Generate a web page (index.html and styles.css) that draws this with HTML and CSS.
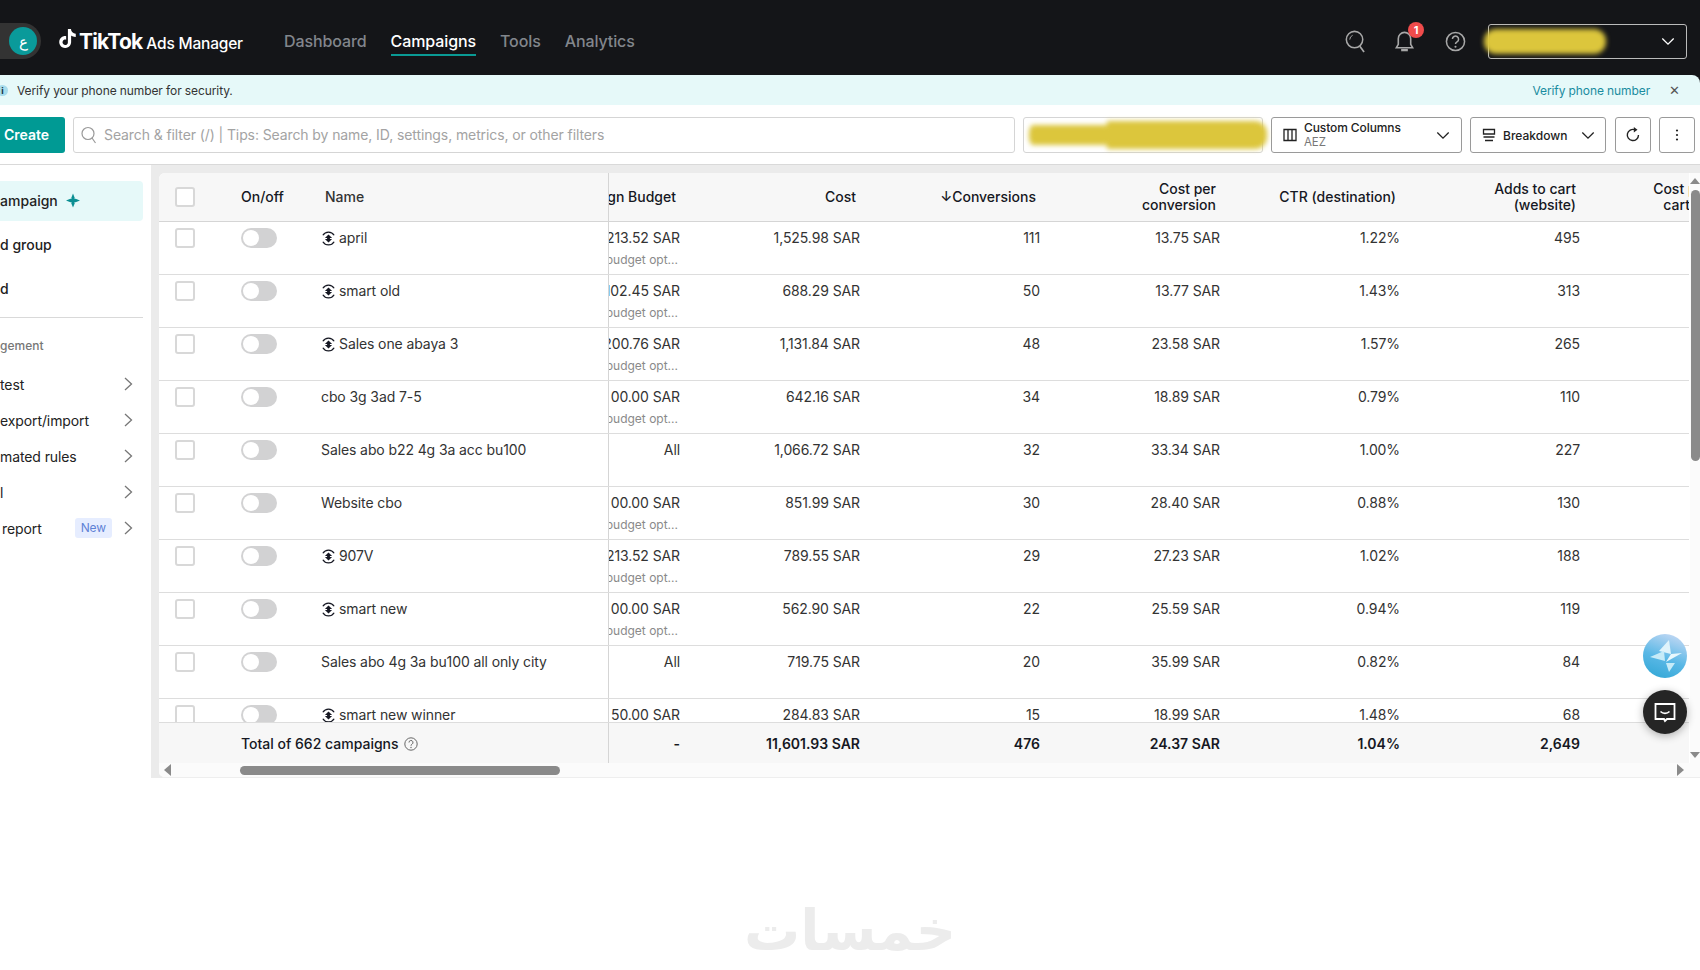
FILE: index.html
```html
<!DOCTYPE html>
<html lang="en">
<head>
    <meta charset="UTF-8">
    <title>TikTok Ads Manager</title>
    <link rel="stylesheet" href="styles.css">
</head>
<body>
    <svg class="sprite" xmlns="http://www.w3.org/2000/svg">
        <symbol id="smart" viewBox="0 0 16 16">
            <path d="M2 4.500A7 7 0 0 1 14 4.500M2 11.500A7 7 0 0 0 14 11.500" fill="none" stroke="currentColor" stroke-width="1.400"/>
            <path d="M8 3.800L11.800 7.400H9.500V8.600H11.800L8 12.200L4.200 8.600H6.500V7.400H4.200Z" fill="currentColor"/>
        </symbol>
        <symbol id="chev-right" viewBox="0 0 12 16">
            <path d="M3 2L9.500 8L3 14" fill="none" stroke="currentColor" stroke-width="1.300"/>
        </symbol>
        <symbol id="chev-down" viewBox="0 0 16 10">
            <path d="M1.500 1.500L8 8L14.500 1.500" fill="none" stroke="currentColor" stroke-width="1.500"/>
        </symbol>
    </svg>

    <header class="topbar">
        <div class="avatar-pill"><span class="avatar">ع</span></div>
        <div class="brand">
            <svg class="brand-note" viewBox="0 0 24 24"><path fill="#fff" d="M12.525.02c1.31-.02 2.61-.01 3.91-.02.08 1.53.63 3.09 1.75 4.17 1.12 1.11 2.7 1.62 4.24 1.79v4.03c-1.44-.05-2.89-.35-4.2-.97-.57-.26-1.1-.59-1.62-.93-.01 2.92.01 5.84-.02 8.75-.08 1.4-.54 2.79-1.35 3.94-1.31 1.92-3.58 3.17-5.91 3.21-1.43.08-2.86-.31-4.08-1.03-2.02-1.19-3.44-3.37-3.65-5.71-.02-.5-.03-1-.01-1.49.18-1.9 1.12-3.72 2.58-4.96 1.66-1.44 3.98-2.13 6.15-1.72.02 1.48-.04 2.96-.04 4.44-.99-.32-2.15-.23-3.02.37-.63.41-1.11 1.04-1.36 1.75-.21.51-.15 1.07-.14 1.61.24 1.64 1.82 3.02 3.5 2.87 1.12-.01 2.19-.66 2.77-1.61.19-.33.4-.67.41-1.06.1-1.79.06-3.57.07-5.36.01-4.03-.01-8.05.02-12.07z"/></svg>
            <span class="brand-name">TikTok</span>
            <span class="brand-sub">Ads Manager</span>
        </div>
        <nav class="nav">
            <a>Dashboard</a>
            <a class="active">Campaigns</a>
            <a>Tools</a>
            <a>Analytics</a>
        </nav>
        <div class="top-icons">
            <svg class="top-icon search-top" viewBox="0 0 22 24"><circle cx="10" cy="10" r="8.600" fill="none" stroke="#a8a8a8" stroke-width="1.600"/><path d="M15.500 17L20 23" stroke="#a8a8a8" stroke-width="1.800" fill="none"/><path d="M5 10a5 5 0 0 1 3-4.500" stroke="#a8a8a8" stroke-width="1" fill="none"/></svg>
            <div class="bell">
                <svg class="top-icon" viewBox="0 0 22 24"><path d="M11 2.500a6.500 6.500 0 0 0-6.500 6.500v6L2.500 18.500h17L17.500 15V9A6.500 6.500 0 0 0 11 2.500Z" fill="none" stroke="#a8a8a8" stroke-width="1.700"/><path d="M7.500 21h7" stroke="#a8a8a8" stroke-width="2.500" fill="none"/></svg>
                <span class="badge">1</span>
            </div>
            <svg class="top-icon help" viewBox="0 0 22 22"><circle cx="11" cy="11" r="9.500" fill="none" stroke="#a8a8a8" stroke-width="1.600"/><path d="M7.800 8.500a3.200 3.200 0 1 1 4.800 2.800c-1 .6-1.600 1.200-1.600 2.400" fill="none" stroke="#a8a8a8" stroke-width="1.600"/><circle cx="11" cy="16.500" r="1.100" fill="#a8a8a8"/></svg>
        </div>
        <div class="account">
            <div class="smudge smudge-account"></div>
            <svg class="account-chev"><use href="#chev-down"/></svg>
        </div>
    </header>

    <div class="banner-wrap">
        <div class="banner">
            <span class="info-dot">i</span>
            <span class="banner-text">Verify your phone number for security.</span>
            <a class="banner-link">Verify phone number</a>
            <span class="banner-close">✕</span>
        </div>
    </div>

    <div class="toolbar">
        <button class="create">Create</button>
        <div class="search">
            <svg class="search-icon" viewBox="0 0 16 18"><circle cx="7" cy="7.500" r="6" fill="none" stroke="#999" stroke-width="1.200"/><path d="M11 12L14.500 17" stroke="#999" stroke-width="1.200"/></svg>
            <span>Search &amp; filter (/) | Tips: Search by name, ID, settings, metrics, or other filters</span>
        </div>
        <div class="date-box"><div class="smudge smudge-date"></div></div>
        <div class="tool-btn columns">
            <svg class="tool-icon" viewBox="0 0 14 14"><path d="M1 1.500H13V12.500H1ZM5 1.500V12.500M9 1.500V12.500" fill="none" stroke="#222" stroke-width="1.300"/></svg>
            <div class="columns-label"><span>Custom Columns</span><small>AEZ</small></div>
            <svg class="tool-chev"><use href="#chev-down"/></svg>
        </div>
        <div class="tool-btn breakdown">
            <svg class="tool-icon" viewBox="0 0 14 14"><path d="M1.500 1.500H12.500V6H1.500ZM1.500 9H12.500M3 12.500H11" fill="none" stroke="#222" stroke-width="1.300"/></svg>
            <span>Breakdown</span>
            <svg class="tool-chev"><use href="#chev-down"/></svg>
        </div>
        <div class="tool-btn square refresh">
            <svg viewBox="0 0 16 16" width="16" height="16"><path d="M13.500 8A5.600 5.600 0 1 1 9.800 2.700" fill="none" stroke="#222" stroke-width="1.400"/><path d="M8.800 0L12.500 2.800L8.800 5.500Z" fill="#222"/></svg>
        </div>
        <div class="tool-btn square more">
            <svg viewBox="0 0 4 14" width="4" height="14"><circle cx="2" cy="2.500" r="1.100" fill="#222"/><circle cx="2" cy="7" r="1.100" fill="#222"/><circle cx="2" cy="11.500" r="1.100" fill="#222"/></svg>
        </div>
    </div>

    <div class="content">
        <aside class="sidebar">
            <div class="side-item active">ampaign
                <svg class="spark" viewBox="0 0 16 16"><path d="M8 0L10 5L9.600 6.400L11 6L16 8L11 10L9.600 9.600L10 11L8 16L6 11L6.400 9.600L5 10L0 8L5 6L6.400 6.400L6 5Z" fill="#0b8f93"/></svg>
            </div>
            <div class="side-item">d group</div>
            <div class="side-item">d</div>
            <div class="side-rule"></div>
            <div class="side-title">gement</div>
            <div class="side-link">test<svg class="side-chev"><use href="#chev-right"/></svg></div>
            <div class="side-link">export/import<svg class="side-chev"><use href="#chev-right"/></svg></div>
            <div class="side-link">mated rules<svg class="side-chev"><use href="#chev-right"/></svg></div>
            <div class="side-link">l<svg class="side-chev"><use href="#chev-right"/></svg></div>
            <div class="side-link"><span class="report">report</span><span class="new-tag">New</span><svg class="side-chev"><use href="#chev-right"/></svg></div>
        </aside>

        <section class="card">
            <div class="table">
                <div class="row head">
                    <div class="c-check"><span class="check"></span></div>
                    <div class="c-toggle">On/off</div>
                    <div class="c-name">Name</div>
                    <div class="c-budget"><span>Campaign Budget</span></div>
                    <div class="num">Cost</div>
                    <div class="num">↓Conversions</div>
                    <div class="num">Cost per<br>conversion</div>
                    <div class="num">CTR (destination)</div>
                    <div class="num">Adds to cart<br>(website)</div>
                    <div class="num">Cost per add to<br>cart (website)</div>
                </div>

                <div class="rows">
                    <div class="row">
                        <div class="c-check"><span class="check"></span></div>
                        <div class="c-toggle"><span class="switch"></span></div>
                        <div class="c-name"><svg class="smart"><use href="#smart"/></svg>april</div>
                        <div class="c-budget"><span>213.52 SAR</span><small>budget opt...</small></div>
                        <div class="num">1,525.98 SAR</div>
                        <div class="num">111</div>
                        <div class="num">13.75 SAR</div>
                        <div class="num">1.22%</div>
                        <div class="num">495</div>
                        <div></div>
                    </div>
                    <div class="row">
                        <div class="c-check"><span class="check"></span></div>
                        <div class="c-toggle"><span class="switch"></span></div>
                        <div class="c-name"><svg class="smart"><use href="#smart"/></svg>smart old</div>
                        <div class="c-budget"><span>102.45 SAR</span><small>budget opt...</small></div>
                        <div class="num">688.29 SAR</div>
                        <div class="num">50</div>
                        <div class="num">13.77 SAR</div>
                        <div class="num">1.43%</div>
                        <div class="num">313</div>
                        <div></div>
                    </div>
                    <div class="row">
                        <div class="c-check"><span class="check"></span></div>
                        <div class="c-toggle"><span class="switch"></span></div>
                        <div class="c-name"><svg class="smart"><use href="#smart"/></svg>Sales one abaya 3</div>
                        <div class="c-budget"><span>200.76 SAR</span><small>budget opt...</small></div>
                        <div class="num">1,131.84 SAR</div>
                        <div class="num">48</div>
                        <div class="num">23.58 SAR</div>
                        <div class="num">1.57%</div>
                        <div class="num">265</div>
                        <div></div>
                    </div>
                    <div class="row">
                        <div class="c-check"><span class="check"></span></div>
                        <div class="c-toggle"><span class="switch"></span></div>
                        <div class="c-name">cbo 3g 3ad 7-5</div>
                        <div class="c-budget"><span>00.00 SAR</span><small>budget opt...</small></div>
                        <div class="num">642.16 SAR</div>
                        <div class="num">34</div>
                        <div class="num">18.89 SAR</div>
                        <div class="num">0.79%</div>
                        <div class="num">110</div>
                        <div></div>
                    </div>
                    <div class="row">
                        <div class="c-check"><span class="check"></span></div>
                        <div class="c-toggle"><span class="switch"></span></div>
                        <div class="c-name">Sales abo b22 4g 3a acc bu100</div>
                        <div class="c-budget"><span>All</span></div>
                        <div class="num">1,066.72 SAR</div>
                        <div class="num">32</div>
                        <div class="num">33.34 SAR</div>
                        <div class="num">1.00%</div>
                        <div class="num">227</div>
                        <div></div>
                    </div>
                    <div class="row">
                        <div class="c-check"><span class="check"></span></div>
                        <div class="c-toggle"><span class="switch"></span></div>
                        <div class="c-name">Website cbo</div>
                        <div class="c-budget"><span>00.00 SAR</span><small>budget opt...</small></div>
                        <div class="num">851.99 SAR</div>
                        <div class="num">30</div>
                        <div class="num">28.40 SAR</div>
                        <div class="num">0.88%</div>
                        <div class="num">130</div>
                        <div></div>
                    </div>
                    <div class="row">
                        <div class="c-check"><span class="check"></span></div>
                        <div class="c-toggle"><span class="switch"></span></div>
                        <div class="c-name"><svg class="smart"><use href="#smart"/></svg>907V</div>
                        <div class="c-budget"><span>213.52 SAR</span><small>budget opt...</small></div>
                        <div class="num">789.55 SAR</div>
                        <div class="num">29</div>
                        <div class="num">27.23 SAR</div>
                        <div class="num">1.02%</div>
                        <div class="num">188</div>
                        <div></div>
                    </div>
                    <div class="row">
                        <div class="c-check"><span class="check"></span></div>
                        <div class="c-toggle"><span class="switch"></span></div>
                        <div class="c-name"><svg class="smart"><use href="#smart"/></svg>smart new</div>
                        <div class="c-budget"><span>00.00 SAR</span><small>budget opt...</small></div>
                        <div class="num">562.90 SAR</div>
                        <div class="num">22</div>
                        <div class="num">25.59 SAR</div>
                        <div class="num">0.94%</div>
                        <div class="num">119</div>
                        <div></div>
                    </div>
                    <div class="row">
                        <div class="c-check"><span class="check"></span></div>
                        <div class="c-toggle"><span class="switch"></span></div>
                        <div class="c-name">Sales abo 4g 3a bu100 all only city</div>
                        <div class="c-budget"><span>All</span></div>
                        <div class="num">719.75 SAR</div>
                        <div class="num">20</div>
                        <div class="num">35.99 SAR</div>
                        <div class="num">0.82%</div>
                        <div class="num">84</div>
                        <div></div>
                    </div>
                    <div class="row">
                        <div class="c-check"><span class="check"></span></div>
                        <div class="c-toggle"><span class="switch"></span></div>
                        <div class="c-name"><svg class="smart"><use href="#smart"/></svg>smart new winner</div>
                        <div class="c-budget"><span>50.00 SAR</span></div>
                        <div class="num">284.83 SAR</div>
                        <div class="num">15</div>
                        <div class="num">18.99 SAR</div>
                        <div class="num">1.48%</div>
                        <div class="num">68</div>
                        <div></div>
                    </div>
                </div>

                <div class="row total">
                    <div class="c-check"></div>
                    <div class="c-total">Total of 662 campaigns
                        <svg class="total-help" viewBox="0 0 14 14"><circle cx="7" cy="7" r="6.200" fill="none" stroke="#666" stroke-width="1"/><path d="M5 5.500a2 2 0 1 1 3 1.700c-.6.400-1 .7-1 1.500" fill="none" stroke="#666" stroke-width="1"/><circle cx="7" cy="10.500" r=".7" fill="#666"/></svg>
                    </div>
                    <div class="c-budget"><span>-</span></div>
                    <div class="num">11,601.93 SAR</div>
                    <div class="num">476</div>
                    <div class="num">24.37 SAR</div>
                    <div class="num">1.04%</div>
                    <div class="num">2,649</div>
                    <div></div>
                </div>
            </div>

            <div class="vscroll">
                <span class="arrow-up"></span>
                <span class="vthumb"></span>
                <span class="arrow-down"></span>
            </div>
            <div class="hscroll">
                <span class="arrow-left"></span>
                <span class="hthumb"></span>
                <span class="arrow-right"></span>
            </div>
        </section>
    </div>

    <div class="float-btn assistant">
        <svg viewBox="0 0 44 44" width="44" height="44"><path d="M26 6L28 20L16 17Z" fill="#dff3fb"/><path d="M7 23L21 17L22 27Z" fill="#c6ebf8"/><path d="M28 20L39 19L23 28Z" fill="#e9f8fd"/><path d="M23 29L32 29L26 38Z" fill="#c6ebf8"/></svg>
    </div>
    <div class="float-btn chat">
        <svg viewBox="0 0 24 24" width="24" height="24"><path d="M2.500 4H21.500V19H14L12 21L11 19H2.500Z" fill="none" stroke="#fff" stroke-width="1.800"/><path d="M7.500 11.500C10 14 14 14 16.500 11.500" fill="none" stroke="#fff" stroke-width="1.600"/></svg>
    </div>

    <footer class="watermark">خمسات</footer>
</body>
</html>
```

FILE: styles.css
```css
* {
    box-sizing: border-box;
}
html, body {
    margin: 0;
    height: 970px;
    overflow: hidden;
}
body {
    position: relative;
    font-family: Inter, "Noto Sans", sans-serif;
    font-size: 14px;
    letter-spacing: -0.1px;
    color: #333;
    background: #fff;
}
.sprite {
    position: absolute;
    width: 0;
    height: 0;
}

/* top bar */
.topbar {
    display: flex;
    align-items: center;
    height: 75px;
    padding-top: 7px;
    background: #141518;
}
.avatar-pill {
    display: flex;
    align-items: center;
    justify-content: flex-end;
    width: 41px;
    height: 36px;
    padding-right: 4px;
    background: #333;
    border-radius: 0 18px 18px 0;
}
.avatar {
    display: flex;
    align-items: center;
    justify-content: center;
    width: 28px;
    height: 28px;
    border-radius: 50%;
    background: #0a9a9a;
    color: #fff;
    font-size: 15px;
}
.brand {
    display: flex;
    align-items: baseline;
    margin-left: 17px;
    width: 226px;
    color: #fff;
}
.brand-note {
    width: 19px;
    height: 23px;
    align-self: center;
    margin-right: 2px;
    margin-top: -6px;
}
.brand-name {
    font-size: 21px;
    font-weight: 700;
    letter-spacing: -0.8px;
}
.brand-sub {
    margin-left: 4px;
    font-size: 15.500px;
    font-weight: 500;
    letter-spacing: -0.2px;
}
.nav {
    display: flex;
    gap: 24px;
    font-size: 16px;
    font-weight: 500;
    color: #82868c;
}
.nav a {
    padding: 5px 0 3px;
    border-bottom: 2px solid transparent;
}
.nav a.active {
    color: #fff;
    border-bottom-color: #0a9a94;
}
.top-icons {
    display: flex;
    align-items: center;
    gap: 30px;
    margin-left: auto;
    margin-right: 22px;
}
.top-icon {
    display: block;
    width: 21px;
    height: 23px;
}
.top-icon.search-top {
    margin-right: -2px;
}
.top-icon.help {
    width: 21px;
    height: 21px;
}
.bell {
    position: relative;
}
.badge {
    position: absolute;
    top: -8px;
    right: -9px;
    width: 16px;
    height: 16px;
    border-radius: 50%;
    background: #f04b4b;
    color: #fff;
    font-size: 11px;
    font-weight: 700;
    line-height: 16px;
    text-align: center;
}
.account {
    display: flex;
    align-items: center;
    justify-content: space-between;
    width: 199px;
    height: 35px;
    margin-right: 13px;
    padding-right: 11px;
    border: 1px solid #bbb;
    border-radius: 3px;
}
.account-chev {
    width: 14px;
    height: 9px;
    color: #fff;
}
.smudge {
    background: #dcc63c;
    border-radius: 12px;
    filter: blur(2.500px);
}
.smudge-account {
    width: 122px;
    height: 25px;
    margin-left: -5px;
}

/* banner */
.banner-wrap {
    background: #141518;
}
.banner {
    display: flex;
    align-items: center;
    height: 30px;
    padding-right: 20px;
    background: #e6f9f9;
    border-top-right-radius: 8px;
    font-size: 12px;
    color: #333;
}
.info-dot {
    flex: none;
    width: 11px;
    height: 11px;
    margin-left: -3px;
    margin-right: 9px;
    border-radius: 50%;
    background: #a7dcec;
    color: #134;
    font-size: 9px;
    font-weight: 700;
    line-height: 11px;
    text-align: center;
}
.banner-link {
    margin-left: auto;
    color: #1a8ca0;
}
.banner-close {
    margin-left: 19px;
    color: #555;
    font-size: 13px;
}

/* toolbar */
.toolbar {
    display: flex;
    align-items: center;
    gap: 8px;
    height: 60px;
    padding-top: 1px;
    border-bottom: 1px solid #d9d9d9;
}
.create {
    width: 65px;
    height: 36px;
    padding: 0 0 2px 4px;
    border: 0;
    border-radius: 0 3px 3px 0;
    background: #009a94;
    color: #fff;
    font: 600 14px Inter, sans-serif;
    text-align: left;
}
.search {
    display: flex;
    align-items: center;
    gap: 7px;
    width: 942px;
    height: 36px;
    padding-left: 7px;
    padding-bottom: 1px;
    border: 1px solid #d5d5d5;
    border-radius: 3px;
    color: #a3a3a3;
}
.search-icon {
    width: 16px;
    height: 18px;
}
.date-box {
    display: flex;
    align-items: center;
    justify-content: flex-start;
    width: 240px;
    height: 36px;
    border: 1px solid #d5d5d5;
    border-radius: 3px;
}
.smudge-date {
    flex: none;
    width: 238px;
    height: 28px;
    margin-left: 5px;
    background:
        linear-gradient(#dcc63c, #dcc63c) left center / 80px 20px no-repeat,
        linear-gradient(#dcc63c, #dcc63c) right center / 160px 100% no-repeat;
}
.tool-btn {
    display: flex;
    align-items: center;
    height: 36px;
    border: 1px solid #9a9a9a;
    border-radius: 3px;
    color: #222;
    font-size: 12px;
    font-weight: 500;
}
.tool-icon {
    flex: none;
    width: 14px;
    height: 14px;
}
.tool-chev {
    flex: none;
    width: 14px;
    height: 9px;
    margin-left: auto;
    color: #222;
}
.columns {
    width: 191px;
    padding: 0 11px;
}
.columns-label {
    display: flex;
    flex-direction: column;
    margin-left: 7px;
    line-height: 14px;
}
.columns-label small {
    font-size: 11.500px;
    font-weight: 400;
    color: #777;
}
.breakdown {
    width: 136px;
    padding: 0 10px 0 11px;
    letter-spacing: 0;
}
.breakdown span {
    margin-left: 7px;
}
.square {
    justify-content: center;
    width: 36px;
}
.refresh {
    margin-left: 1px;
}

/* main area */
.content {
    display: flex;
    height: 613px;
    background: #ebebeb;
}
.sidebar {
    flex: none;
    width: 151px;
    padding-top: 16px;
    padding-right: 8px;
    background: #fff;
    color: #222;
    font-weight: 500;
    letter-spacing: 0;
}
.side-item {
    display: flex;
    align-items: center;
    height: 40px;
    margin-bottom: 4px;
    padding-bottom: 1px;
}
.side-item.active {
    background: #e6f9f9;
    border-radius: 0 4px 4px 0;
}
.spark {
    width: 14px;
    height: 15px;
    margin-left: 8px;
}
.side-rule {
    height: 1px;
    margin-top: 8px;
    background: #d9d9d9;
}
.side-title {
    margin: 20px 0 12px;
    font-size: 12px;
    line-height: 16px;
    color: #777;
}
.side-link {
    display: flex;
    align-items: center;
    height: 36px;
    font-weight: 400;
    letter-spacing: -0.1px;
}
.report {
    margin-left: 2px;
}
.side-chev {
    width: 12px;
    height: 16px;
    margin-left: auto;
    margin-right: 9px;
    color: #777;
}
.new-tag {
    margin-left: auto;
    padding: 0 6px;
    height: 20px;
    border-radius: 3px;
    background: #e6edff;
    color: #5f82d6;
    font-size: 12px;
    line-height: 20px;
}
.new-tag + .side-chev {
    margin-left: 10px;
}

/* table */
.card {
    flex: 1;
    display: flex;
    flex-wrap: wrap;
    align-content: flex-start;
    margin-left: 8px;
    margin-top: 8px;
    background: #fff;
    border-radius: 6px 0 0 6px;
    border-bottom: 1px solid #eee;
    overflow: hidden;
}
.table {
    width: 1530px;
    height: 590px;
    overflow: hidden;
}
.row {
    display: grid;
    grid-template-columns: 82px 80px 287px 76px 180px 180px 180px 180px 180px 180px;
    width: 1605px;
    height: 53px;
    border-bottom: 1px solid #ddd;
}
.rows {
    height: 500px;
    overflow: hidden;
}
.row > div {
    padding-top: 6px;
    line-height: 20px;
}
.check {
    display: block;
    width: 20px;
    height: 20px;
    margin-left: 16px;
    background: #fff;
    border: 2px solid #d8d8d8;
    border-radius: 3px;
}
.switch {
    display: block;
    position: relative;
    width: 36px;
    height: 20px;
    border-radius: 10px;
    background: #d2d2d3;
}
.switch::after {
    content: "";
    position: absolute;
    top: 2px;
    left: 2px;
    width: 16px;
    height: 16px;
    border-radius: 50%;
    background: #fff;
}
.c-name {
    display: flex;
    align-items: flex-start;
    color: #333;
}
.smart {
    flex: none;
    width: 15px;
    height: 15px;
    margin: 3px 3px 0 0;
    color: #161823;
}
.c-budget {
    display: flex;
    flex-direction: column;
    align-items: flex-end;
    padding-right: 4px;
    border-left: 1px solid #d5d5d5;
    overflow: hidden;
    white-space: nowrap;
}
.c-budget small {
    margin-top: 3px;
    padding-right: 2px;
    font-size: 12px;
    line-height: 18px;
    letter-spacing: 0;
    color: #8a8a8a;
}
.num {
    padding-right: 4px;
    text-align: right;
    white-space: nowrap;
}
.head {
    height: 49px;
    background: #f7f7f7;
    color: #161823;
    font-weight: 500;
    letter-spacing: 0;
    border-bottom-color: #d5d5d5;
}
.head > div {
    display: block;
    padding-top: 0;
    line-height: 16px;
    align-self: center;
}
.head .c-check {
    padding: 0;
}
.head .num {
    padding-right: 8px;
}
.head .c-name {
    padding-left: 4px;
}
.head .c-budget {
    align-self: stretch;
    display: flex;
    justify-content: center;
    padding-right: 8px;
}
.total {
    height: 41px;
    background: #f7f7f7;
    color: #161823;
    font-weight: 600;
    letter-spacing: 0;
    border-top: 1px solid #ddd;
    border-bottom: 0;
}
.total > div {
    padding-top: 11px;
}
.c-total {
    grid-column: 2 / span 2;
    display: flex;
    align-items: flex-start;
    font-weight: 500;
}
.total-help {
    width: 14px;
    height: 14px;
    margin: 3px 0 0 5px;
}

/* scrollbars */
.vscroll {
    position: relative;
    width: 10px;
    height: 590px;
    margin-left: 1px;
    background: #fbfbfb;
}
.arrow-up, .arrow-down {
    position: absolute;
    left: 0;
    border-left: 5px solid transparent;
    border-right: 5px solid transparent;
}
.arrow-up {
    top: 5px;
    border-bottom: 6px solid #8a8a8a;
}
.arrow-down {
    bottom: 5px;
    border-top: 6px solid #8a8a8a;
}
.vthumb {
    position: absolute;
    top: 17px;
    left: 1px;
    width: 9px;
    height: 271px;
    border-radius: 5px;
    background: #8a8a8a;
}
.hscroll {
    display: flex;
    align-items: center;
    width: 100%;
    height: 14px;
    background: #fbfbfb;
}
.arrow-left, .arrow-right {
    border-top: 6px solid transparent;
    border-bottom: 6px solid transparent;
}
.arrow-left {
    margin-left: 5px;
    border-right: 7px solid #8a8a8a;
}
.arrow-right {
    margin-left: auto;
    margin-right: 16px;
    border-left: 7px solid #8a8a8a;
}
.hthumb {
    width: 320px;
    height: 9px;
    margin-left: 69px;
    border-radius: 5px;
    background: #8a8a8a;
}

/* floating buttons sit over the table */
.float-btn {
    position: absolute;
    left: 1643px;
    display: flex;
    align-items: center;
    justify-content: center;
    width: 44px;
    height: 44px;
    border-radius: 50%;
}
.assistant {
    top: 634px;
    background: linear-gradient(200deg, #bcd6f3 10%, #5ab8e6 55%, #2ea5d4);
}
.chat {
    top: 690px;
    background: #252525;
    box-shadow: 0 2px 8px rgba(0, 0, 0, 0.3);
}

.watermark {
    margin-top: 118px;
    direction: rtl;
    text-align: center;
    font-family: "DejaVu Sans", sans-serif;
    font-size: 56px;
    font-weight: 700;
    letter-spacing: 0;
    line-height: 70px;
    color: #ececec;
}
```
